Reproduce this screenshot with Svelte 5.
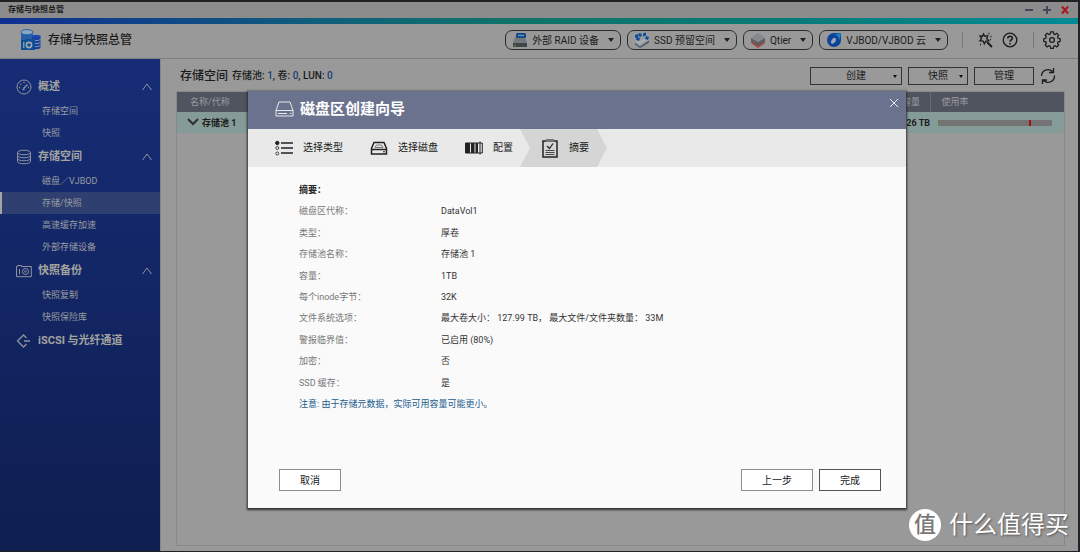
<script lang="ts">
	type MenuGroup = {
		title: string;
		icon: string;
		items: { label: string; active?: boolean }[];
	};

	const groups: MenuGroup[] = [
		{ title: '概述', icon: 'gauge', items: [{ label: '存储空间' }, { label: '快照' }] },
		{
			title: '存储空间',
			icon: 'disks',
			items: [
				{ label: '磁盘／VJBOD' },
				{ label: '存储/快照', active: true },
				{ label: '高速缓存加速' },
				{ label: '外部存储设备' }
			]
		},
		{ title: '快照备份', icon: 'camera', items: [{ label: '快照复制' }, { label: '快照保险库' }] },
		{ title: 'iSCSI 与光纤通道', icon: 'iscsi', items: [] }
	];

	const tools = [
		{ label: '外部 RAID 设备', icon: 'raid' },
		{ label: 'SSD 预留空间', icon: 'ssd' },
		{ label: 'Qtier', icon: 'qtier' },
		{ label: 'VJBOD/VJBOD 云', icon: 'vjbod' }
	];

	const steps = [
		{ label: '选择类型', icon: 'list' },
		{ label: '选择磁盘', icon: 'drive' },
		{ label: '配置', icon: 'bars' },
		{ label: '摘要', icon: 'check', active: true }
	];

	const summary = [
		['磁盘区代称：', 'DataVol1'],
		['类型：', '厚卷'],
		['存储池名称：', '存储池 1'],
		['容量：', '1TB'],
		['每个inode字节：', '32K'],
		['文件系统选项：', '最大卷大小： 127.99 TB， 最大文件/文件夹数量： 33M'],
		['警报临界值：', '已启用 (80%)'],
		['加密：', '否'],
		['SSD 缓存：', '是']
	];

	const threshold = 80;
</script>

<div class="window">
	<div class="titlebar">
		<span class="titlebar__name">存储与快照总管</span>
		<button class="titlebar__button" aria-label="最小化">
			<svg width="10" height="10" viewBox="0 0 10 10"><path d="M1 5h8" /></svg>
		</button>
		<button class="titlebar__button" aria-label="最大化">
			<svg width="10" height="10" viewBox="0 0 10 10"><path d="M1 5h8M5 1v8" /></svg>
		</button>
		<button class="titlebar__button titlebar__button--close" aria-label="关闭窗口">
			<svg width="10" height="10" viewBox="0 0 10 10"><path d="M2 1.5l6 7M8 1.5l-6 7" /></svg>
		</button>
	</div>
	<div class="strip"></div>

	<header class="header">
		<svg class="header__logo" width="22" height="22" viewBox="0 0 22 22">
			<path d="M1 3v8c3 2 9 2 12 0V3z" fill="#2a5fa8" />
			<ellipse cx="7" cy="3.2" rx="6" ry="2.6" fill="#8ea6bd" stroke="#1f62b5" />
			<path d="M12 7v12c2 1.600 6 1.600 8.500 0V7z" fill="#1a3f9a" />
			<path d="M12 10.500c2 1.500 6 1.500 8.500 0M12 13.500c2 1.500 6 1.500 8.500 0M12 16.500c2 1.500 6 1.500 8.500 0" fill="none" stroke="#8594ad" />
			<ellipse cx="16.200" cy="7.500" rx="4.300" ry="1.800" fill="#1a46b4" />
			<path d="M1 11h4l1-1h7l1 1h1v10H1z" fill="#0b4f96" />
			<path d="M3.800 13v6" stroke="#a4a9ae" stroke-width="1.200" />
			<circle cx="9" cy="16" r="2.600" fill="none" stroke="#a4a9ae" stroke-width="1.600" />
		</svg>
		<h1 class="header__title">存储与快照总管</h1>
		<div class="header__tools">
			{#each tools as tool}
				<button class="pill">
					<svg width="16" height="16" viewBox="0 0 16 16">
						{#if tool.icon === 'raid'}
							<path d="M3 5h10l2 6H1z" fill="#74797e" />
							<path d="M1 11h14v4H1z" fill="#41464b" />
							<rect x="4" y="1" width="10" height="5" rx="1.500" fill="#0b468c" />
							<path d="M6 3.500h6" stroke="#8fa3b8" stroke-width="1.500" stroke-dasharray="1.200 .4" />
							<path d="M2 13.500h2" stroke="#4c9b2e" />
						{:else if tool.icon === 'ssd'}
							<path d="M1 11l5 3.500 9-6v2l-9 5.500-5-3.500z" fill="#42566d" />
							<path d="M1 9l5 3.500 9-5.500-2-1-7 3-3-1.500z" fill="#a5adb3" />
							<path d="M1 3l3-1v3l-3 1zM5 1l3 1-1 3-3-1zM9 1.500l3-1v3l-3 1zM12 4l3 1-1 3-3-1zM3 5l3 1-1 3-3-1z" fill="#0b4d9b" />
						{:else if tool.icon === 'qtier'}
							<path d="M1 9l7 4 7-4v2l-7 5-7-5z" fill="#a34a3f" />
							<path d="M1 6l7 4 7-4v3l-7 5-7-5z" fill="#5a5d61" />
							<path d="M8 1l7 4.500L8 10 1 5.500z" fill="#85888b" />
						{:else}
							<path d="M8 1h7v7a7 7 0 1 1-7-7z" fill="#0c4399" />
							<path d="M15 1L8 2.500a6 6 0 0 1 5.500 6z" fill="#1784bd" />
							<ellipse cx="7.500" cy="8.800" rx="2" ry="3.200" transform="rotate(35 7.500 8.800)" fill="#98a8b8" />
						{/if}
					</svg>
					<span class="pill__label">{tool.label}</span>
					<span class="caret"></span>
				</button>
			{/each}
		</div>
		<div class="header__actions">
			<button class="icon-button" aria-label="向导">
				<svg width="16" height="16" viewBox="0 0 16 16">
					<path d="M6.500 2l1.300 2.300 2.900-.6-1 2.800 2 2.300-2.900.3-1.500 2.600-1.200-2.700L2.900 8.700l1.700-2.300L3 4l2.600.2z" />
					<path d="M10 10l5 5" stroke-width="2" />
					<path d="M11.500 1.500h1M13.500 4.500h1M13 7.500h1M3 12.500h1" />
				</svg>
			</button>
			<button class="icon-button" aria-label="帮助">
				<svg width="16" height="16" viewBox="0 0 16 16">
					<circle cx="8" cy="8" r="6.800" />
					<path d="M5.800 6.500c0-3 4.500-3 4.500-.3C10.300 8 8 8 8 9.800M8 11v1.500" stroke-width="1.600" />
				</svg>
			</button>
		</div>
		<button class="icon-button icon-button--settings" aria-label="设置">
			<svg width="18" height="18" viewBox="0 0 18 18">
				<path
					d="M7.600 1h2.800l.5 2.200 1.300.6 2-1.300 2 2-1.300 2 .6 1.300 2.200.5v2.800l-2.200.5-.6 1.300 1.300 2-2 2-2-1.300-1.300.6-.5 2.200H7.600l-.5-2.200-1.300-.6-2 1.300-2-2 1.300-2-.6-1.300-2.200-.5V8.300l2.200-.5.6-1.300-1.300-2 2-2 2 1.300 1.300-.6z"
					transform="translate(.5 0) scale(.94)"
				/>
				<circle cx="9" cy="9" r="2.400" />
			</svg>
		</button>
	</header>

	<div class="layout">
		<nav class="sidebar">
			{#each groups as group}
				<button class="sidebar__group">
					<svg class="sidebar__icon" width="16" height="16" viewBox="0 0 16 16">
						{#if group.icon === 'gauge'}
							<circle cx="8" cy="8" r="7" />
							<path d="M7.500 9.500l4-4M3 8.500h1M4.500 5l.7.7M8 3v1M12 8.500h1M6.500 10.500h2" stroke-width="1.400" />
						{:else if group.icon === 'disks'}
							<ellipse cx="8" cy="3.500" rx="6.500" ry="2.300" />
							<path d="M1.500 3.500v9c0 3 13 3 13 0v-9M1.500 6.500c0 3 13 3 13 0M1.500 9.500c0 3 13 3 13 0" />
						{:else if group.icon === 'camera'}
							<path d="M.5 3.500h1v-1h4v1h9.800v10.200H.5zM3.500 6v5.500" />
							<circle cx="9.500" cy="8.500" r="3" />
							<circle cx="9.500" cy="8.500" r=".8" />
						{:else}
							<path d="M10.500 5L7.500 2l-6 6 6 6 3-3M8 8h6" stroke-width="1.300" />
						{/if}
					</svg>
					<span>{group.title}</span>
					{#if group.items.length}
						<svg class="sidebar__chevron" width="10" height="8" viewBox="0 0 10 8">
							<path d="M.5 7L5 1l4.500 6" />
						</svg>
					{/if}
				</button>
				{#each group.items as item}
					<a href="#top" class="sidebar__item" class:sidebar__item--active={item.active}>{item.label}</a>
				{/each}
			{/each}
		</nav>

		<main class="main">
			<div class="toolbar">
				<h2 class="toolbar__title">存储空间</h2>
				<p class="toolbar__stats">存储池: <b>1</b>, 卷: <b>0</b>, LUN: <b>0</b></p>
				<button class="action action--wide">创建<span class="caret caret--small"></span></button>
				<button class="action">快照<span class="caret caret--small"></span></button>
				<button class="action">管理</button>
				<button class="icon-button" aria-label="刷新">
					<svg width="16" height="18" viewBox="0 0 16 18">
						<path d="M1.500 9a6.500 6.500 0 0 1 11-4.500M14.500 8.500a6.500 6.500 0 0 1-11 5M13.500 1v4.500H9M2.500 17v-4H7" />
					</svg>
				</button>
			</div>

			<div class="panel">
				<table class="table">
					<thead>
						<tr>
							<th>名称/代称</th>
							<th class="table__size">容量</th>
							<th class="table__usage">使用率</th>
						</tr>
					</thead>
					<tbody>
						<tr>
							<td>
								<svg class="table__arrow" width="12" height="8" viewBox="0 0 12 8"><path d="M1 1l5 5 5-5" /></svg>存储池 1
							</td>
							<td class="table__size">7.26 TB</td>
							<td class="table__usage">
								<div class="usage"><span class="usage__mark" style="left: {threshold}%"></span></div>
							</td>
						</tr>
					</tbody>
				</table>
			</div>
		</main>
	</div>

	<div class="dialog" role="dialog" aria-labelledby="dialog-title">
		<div class="dialog__head">
			<svg width="19" height="16" viewBox="0 0 19 16">
				<path d="M1 9.500L4 1h11l3 8.500v5.500H1zM1 9.500h17M3 12.500h9M15 12.500h1.500" />
			</svg>
			<h2 class="dialog__title" id="dialog-title">磁盘区创建向导</h2>
			<button class="dialog__close" aria-label="关闭">
				<svg width="10" height="10" viewBox="0 0 10 10"><path d="M1 1l8 8M9 1L1 9" /></svg>
			</button>
		</div>

		<ol class="steps">
			{#each steps as step}
				<li class="step" class:step--active={step.active}>
					<svg width="18" height="20" viewBox="0 0 18 20">
						{#if step.icon === 'list'}
							<path d="M6 5h12M6 10h12M6 15h12" stroke-width="1.500" />
							<circle cx="2.300" cy="5" r="1.700" fill="#222" />
							<circle cx="2.300" cy="10" r="1.500" stroke-width=".8" />
							<circle cx="2.300" cy="15.500" r="1.500" stroke-width=".8" />
						{:else if step.icon === 'drive'}
							<path d="M1.500 10.500L4 4.500h10l2.500 6v5.500h-15zM1.500 11.500h15" stroke-width="1.500" />
							<path d="M5 9.500L6.500 7h5L13 9.500z" stroke="#777" />
							<path d="M13 13.800h2" />
						{:else if step.icon === 'bars'}
							<path d="M.5 5h16.800v10H.5z" />
							<path d="M1 5h4v10H1zM6 5h3.500v10H6zM10.500 5H13v10h-2.500z" fill="#222" stroke="none" />
							<path d="M15 3.500v13" />
						{:else}
							<path d="M2 3h14v16H2z" stroke-width="1.500" />
							<path d="M5 1h8v3H5z" fill="#777" stroke="none" />
							<path d="M6 8l2.500 2.500L12 5.500" stroke-width="1.200" />
							<path d="M4.500 12.500h9M4.500 14.500h9M4.500 16.500h9" stroke-width=".8" />
						{/if}
					</svg>
					<span>{step.label}</span>
				</li>
			{/each}
		</ol>

		<div class="dialog__body">
			<div class="summary">
				<h3 class="summary__title">摘要：</h3>
				{#each summary as [label, value]}
					<div class="summary__row">
						<span class="summary__label">{label}</span>
						<span>{value}</span>
					</div>
				{/each}
				<p class="summary__note">注意: 由于存储元数据，实际可用容量可能更小。</p>
			</div>
			<div class="dialog__foot">
				<button class="button">取消</button>
				<button class="button button--back">上一步</button>
				<button class="button button--primary">完成</button>
			</div>
		</div>
	</div>

	<div class="watermark">
		<span class="watermark__badge">值</span>
		<span>什么值得买</span>
	</div>
</div>

<style>
	:global(body) {
		margin: 0;
		background: #222226;
	}
	.window,
	.window :global(*) {
		box-sizing: border-box;
	}
	.window {
		position: relative;
		display: flex;
		flex-direction: column;
		min-height: 100vh;
		border: solid #222226;
		border-width: 2px 2px 1px 0;
		background: #999;
		color: #1b1b1b;
		font-family: Roboto, 'Noto Sans CJK SC', sans-serif;
		font-size: 10px;
		line-height: 16px;
	}
	h1,
	h2,
	h3,
	p,
	ol {
		margin: 0;
		padding: 0;
	}
	button {
		padding: 0;
		border: 0;
		background: none;
		color: inherit;
		font: inherit;
		cursor: pointer;
	}
	svg {
		display: block;
		flex: none;
		fill: none;
		stroke: none;
	}

	.titlebar {
		display: flex;
		align-items: center;
		gap: 8px;
		height: 16px;
		padding: 0 8px;
		background: #8c8c8c;
		font-size: 8px;
		font-weight: bold;
	}
	.titlebar__name {
		flex: 1;
	}
	.titlebar__button svg {
		stroke: #42475a;
		stroke-width: 2;
	}
	.titlebar__button--close svg {
		stroke: #ad1620;
	}
	.strip {
		height: 6px;
		background: linear-gradient(90deg, #102e92, #0f5f7c 30%, #0f7468 48%, #087a77 72%, #008a96);
	}

	.header {
		display: flex;
		align-items: center;
		height: 35px;
		padding: 0 17px 2px 20px;
		border-bottom: 1px solid #7f7f7f;
	}
	.header__logo {
		margin-right: 6px;
	}
	.header__title {
		flex: 1;
		font-size: 12px;
		font-weight: 500;
	}
	.header__tools {
		display: flex;
		gap: 6px;
	}
	.pill {
		display: flex;
		align-items: center;
		height: 20px;
		padding: 0 6px;
		border: 1px solid #2c2c2c;
		border-radius: 7px;
	}
	.pill__label {
		padding: 2px 9px 0 4px;
	}
	.caret {
		border: solid transparent;
		border-width: 4px 3px 0;
		border-top-color: #222;
	}
	.caret--small {
		border-width: 3px 2px 0;
		border-top-color: #111;
	}
	.header__actions {
		display: flex;
		gap: 9px;
		margin: 0 13px 0 14px;
		padding: 0 15px 0 14px;
		border: solid #7b7b74;
		border-width: 0 1px;
	}
	.icon-button svg {
		stroke: #1c1c1c;
		stroke-width: 1.3;
	}
	.header .icon-button--settings {
		margin-left: -4px;
	}

	.layout {
		display: flex;
		flex: 1;
	}
	.sidebar {
		flex: none;
		width: 160px;
		padding-top: 15px;
		background: linear-gradient(#162d76, #0f1e50);
		color: #a3a49f;
	}
	.sidebar__group {
		display: flex;
		align-items: center;
		gap: 6px;
		width: 100%;
		height: 26px;
		padding: 0 8px 0 16px;
		font-size: 11px;
		font-weight: bold;
	}
	.sidebar__icon,
	.sidebar__chevron {
		stroke: #92949c;
	}
	.sidebar__chevron {
		margin-left: auto;
	}
	.sidebar__item {
		display: flex;
		align-items: center;
		height: 22px;
		padding-left: 42px;
		color: #9a9ca0;
		font-size: 9px;
		text-decoration: none;
	}
	.sidebar__item--active {
		padding-left: 40px;
		border-left: 2px solid #a5a5a5;
		background: #2f3f6f;
	}

	.main {
		display: flex;
		flex: 1;
		flex-direction: column;
		padding: 5px 13px 5px 15px;
		border-left: 1px solid #858585;
	}
	.toolbar {
		display: flex;
		align-items: center;
		gap: 6px;
		height: 24px;
		margin: 0 9px 3px 4px;
	}
	.toolbar__title {
		margin-right: -2px;
		font-size: 12px;
		font-weight: 500;
	}
	.toolbar__stats {
		flex: 1;
		font-size: 10px;
		font-weight: 500;
	}
	.toolbar__stats b {
		color: #173f73;
		font-weight: 500;
	}
	.action {
		position: relative;
		width: 60px;
		height: 18px;
		border: 1px solid #333;
	}
	.action--wide {
		width: 92px;
	}
	.action .caret {
		position: absolute;
		top: 7px;
		right: 4px;
	}
	.panel {
		flex: 1;
		border: 1px solid #888;
	}
	.table {
		width: 100%;
		border-collapse: collapse;
		table-layout: fixed;
	}
	.table th,
	.table td {
		height: 20px;
		padding: 0 13px;
		text-align: left;
	}
	.table th {
		background: #50545e;
		color: #989ba0;
		font-size: 9px;
		font-weight: normal;
	}
	.table td {
		height: 21px;
		padding-left: 10px;
		background: #849b97;
		font-size: 9px;
		font-weight: bold;
	}
	.table .table__size {
		width: 60px;
		padding: 0 0 0 32px;
	}
	.table td.table__size {
		padding: 0;
		text-align: right;
	}
	.table .table__usage {
		width: 134px;
		padding: 0 12px 0 11px;
	}
	.table td.table__usage {
		padding-left: 8px;
	}
	.table th.table__usage {
		border-left: 1px solid #666b76;
	}
	.table__arrow {
		display: inline-block;
		margin-right: 3px;
		stroke: #303030;
		stroke-width: 2;
	}
	.usage {
		position: relative;
		height: 6px;
		border-left: 1px solid #5c8a45;
		background: #747474;
	}
	.usage__mark {
		position: absolute;
		top: 0;
		width: 2px;
		height: 100%;
		background: #a80c12;
	}

	.dialog {
		position: absolute;
		top: 89px;
		right: 172px;
		left: 248px;
		display: flex;
		flex-direction: column;
		height: 417px;
		background: #fafafa;
		box-shadow: 0 1px 2px 1px #303030;
		font-size: 9px;
	}
	.dialog__head {
		display: flex;
		align-items: center;
		gap: 6px;
		height: 38px;
		padding: 0 7px 2px 27px;
		background: #6b728e;
		color: #fff;
	}
	.dialog__head svg {
		stroke: #e8eaf0;
	}
	.dialog__title {
		flex: 1;
		font-size: 15px;
		font-weight: bold;
	}
	.dialog__close {
		align-self: flex-start;
		margin-top: 7px;
	}
	.steps {
		display: flex;
		height: 38px;
		padding-left: 27px;
		background: #e9e9e9;
		list-style: none;
	}
	.step {
		display: flex;
		align-items: center;
		gap: 10px;
		margin-right: 27px;
		color: #222;
		font-size: 10px;
	}
	.step svg {
		stroke: #222;
	}
	.step--active {
		margin-left: -20px;
		padding: 0 18px 0 21px;
		background: #d5d5d5;
		clip-path: polygon(0 0, calc(100% - 10px) 0, 100% 50%, calc(100% - 10px) 100%, 0 100%, 10px 50%);
	}
	.dialog__body {
		display: flex;
		flex: 1;
		flex-direction: column;
		padding: 12px 25px 17px 31px;
	}
	.summary {
		display: grid;
		flex: 1;
		grid-auto-rows: 1fr;
		align-items: center;
		margin-bottom: 54px;
		padding-left: 20px;
		color: #333;
	}
	.summary__title {
		color: #222;
		font-size: 9px;
		font-weight: bold;
	}
	.summary__row {
		display: grid;
		grid-template-columns: 142px 1fr;
	}
	.summary__label {
		color: #777;
	}
	.summary__note {
		color: #1b5c8d;
	}
	.dialog__foot {
		display: flex;
		gap: 6px;
	}
	.button {
		width: 62px;
		height: 22px;
		padding-top: 1px;
		border: 1px solid #8c8c8c;
		background: #fff;
		color: #222;
		font-size: 10px;
	}
	.button--back {
		width: 72px;
		margin-left: auto;
	}
	.button--primary {
		border-color: #555;
	}

	.watermark {
		position: absolute;
		right: 9px;
		bottom: 10px;
		display: flex;
		align-items: center;
		gap: 8px;
		color: #fff;
		font-size: 24px;
		line-height: 32px;
		text-shadow: 1px 1px 2px #555;
	}
	.watermark__badge {
		width: 32px;
		border-radius: 50%;
		background: #fff;
		color: #777;
		font-size: 22px;
		font-weight: 500;
		text-align: center;
		text-shadow: none;
	}
</style>
